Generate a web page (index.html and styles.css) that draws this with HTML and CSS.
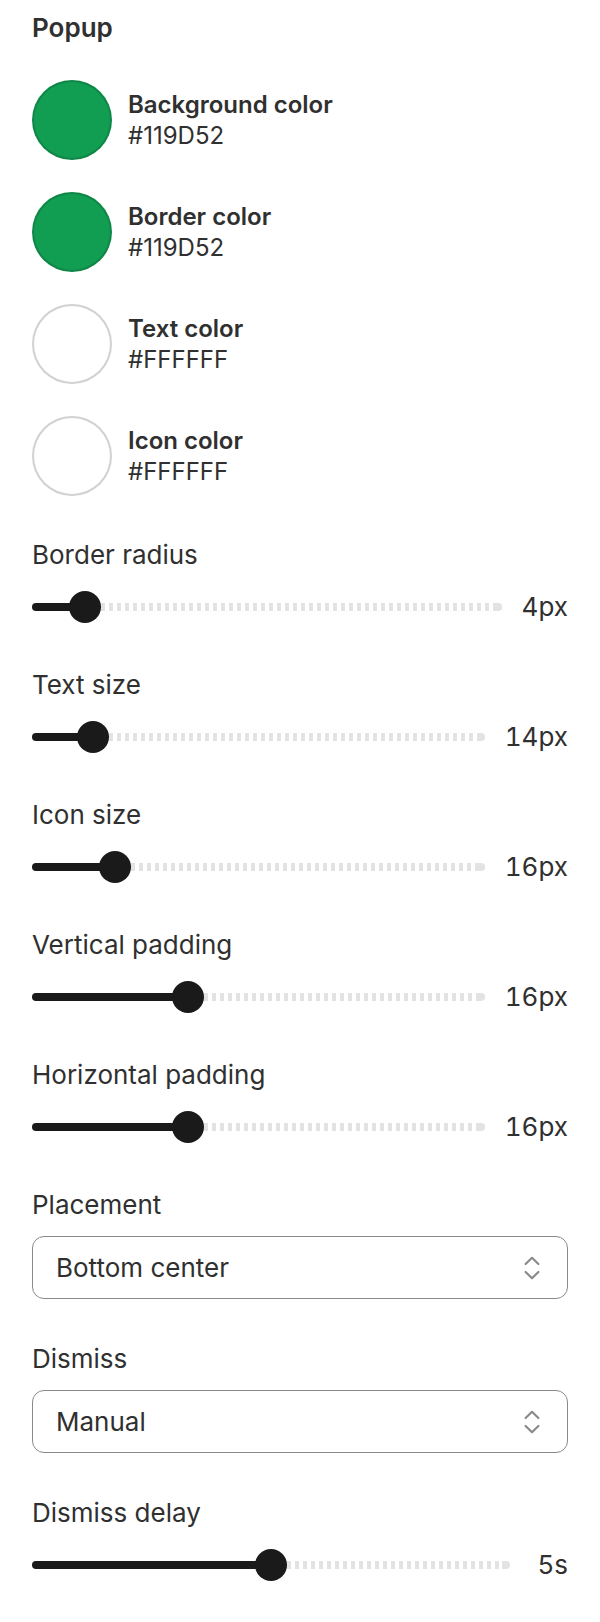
FILE: index.html
```html
<!DOCTYPE html>
<html lang="en">
<head>
<meta charset="utf-8">
<title>Popup settings</title>
<link rel="stylesheet" href="styles.css">
</head>
<body>
<main class="panel">
  <h1 class="title">Popup</h1>

  <section class="colors">
    <div class="color-row">
      <span class="swatch swatch-green"></span>
      <div class="color-text">
        <div class="color-name">Background color</div>
        <div class="color-hex">#119D52</div>
      </div>
    </div>
    <div class="color-row">
      <span class="swatch swatch-green"></span>
      <div class="color-text">
        <div class="color-name">Border color</div>
        <div class="color-hex">#119D52</div>
      </div>
    </div>
    <div class="color-row">
      <span class="swatch swatch-white"></span>
      <div class="color-text">
        <div class="color-name">Text color</div>
        <div class="color-hex">#FFFFFF</div>
      </div>
    </div>
    <div class="color-row">
      <span class="swatch swatch-white"></span>
      <div class="color-text">
        <div class="color-name">Icon color</div>
        <div class="color-hex">#FFFFFF</div>
      </div>
    </div>
  </section>

  <section class="settings">
    <div class="field field-slider">
      <div class="field-label">Border radius</div>
      <div class="slider">
        <div class="track">
          <div class="fill" style="width: 53px"></div>
          <div class="rest"></div>
          <span class="thumb" style="left: 53px"></span>
        </div>
        <span class="value">4px</span>
      </div>
    </div>

    <div class="field field-slider">
      <div class="field-label">Text size</div>
      <div class="slider">
        <div class="track">
          <div class="fill" style="width: 61px"></div>
          <div class="rest"></div>
          <span class="thumb" style="left: 61px"></span>
        </div>
        <span class="value">14px</span>
      </div>
    </div>

    <div class="field field-slider">
      <div class="field-label">Icon size</div>
      <div class="slider">
        <div class="track">
          <div class="fill" style="width: 83px"></div>
          <div class="rest"></div>
          <span class="thumb" style="left: 83px"></span>
        </div>
        <span class="value">16px</span>
      </div>
    </div>

    <div class="field field-slider">
      <div class="field-label">Vertical padding</div>
      <div class="slider">
        <div class="track">
          <div class="fill" style="width: 156px"></div>
          <div class="rest"></div>
          <span class="thumb" style="left: 156px"></span>
        </div>
        <span class="value">16px</span>
      </div>
    </div>

    <div class="field field-slider">
      <div class="field-label">Horizontal padding</div>
      <div class="slider">
        <div class="track">
          <div class="fill" style="width: 156px"></div>
          <div class="rest"></div>
          <span class="thumb" style="left: 156px"></span>
        </div>
        <span class="value">16px</span>
      </div>
    </div>

    <div class="field field-select">
      <div class="field-label">Placement</div>
      <div class="select">
        <span class="select-text">Bottom center</span>
        <svg class="select-icon" viewBox="0 0 16 24" width="16" height="24" aria-hidden="true">
          <path d="M1.6 8 L8 1.8 L14.4 8" fill="none" stroke="currentColor" stroke-width="2.2" stroke-linecap="round" stroke-linejoin="round"/>
          <path d="M1.6 16 L8 22.2 L14.4 16" fill="none" stroke="currentColor" stroke-width="2.2" stroke-linecap="round" stroke-linejoin="round"/>
        </svg>
      </div>
    </div>

    <div class="field field-select">
      <div class="field-label">Dismiss</div>
      <div class="select">
        <span class="select-text">Manual</span>
        <svg class="select-icon" viewBox="0 0 16 24" width="16" height="24" aria-hidden="true">
          <path d="M1.6 8 L8 1.8 L14.4 8" fill="none" stroke="currentColor" stroke-width="2.2" stroke-linecap="round" stroke-linejoin="round"/>
          <path d="M1.6 16 L8 22.2 L14.4 16" fill="none" stroke="currentColor" stroke-width="2.2" stroke-linecap="round" stroke-linejoin="round"/>
        </svg>
      </div>
    </div>

    <div class="field field-slider">
      <div class="field-label">Dismiss delay</div>
      <div class="slider">
        <div class="track">
          <div class="fill" style="width: 239px"></div>
          <div class="rest"></div>
          <span class="thumb" style="left: 239px"></span>
        </div>
        <span class="value value-short">5s</span>
      </div>
    </div>
  </section>
</main>
</body>
</html>
```

FILE: styles.css
```css
* {
  box-sizing: border-box;
}

html, body {
  margin: 0;
  padding: 0;
  background: #ffffff;
}

body {
  font-family: Inter, "Noto Sans", "Liberation Sans", sans-serif;
  color: #303030;
  font-size: 26px;
  line-height: 32px;
}

.panel {
  padding: 12px 32px 0 32px;
}

.title {
  margin: 0;
  font-size: 26px;
  line-height: 32px;
  font-weight: 600;
}

.colors {
  margin-top: 36px;
  display: flex;
  flex-direction: column;
  gap: 32px;
}

.color-row {
  display: flex;
  align-items: center;
  gap: 16px;
}

.swatch {
  width: 80px;
  height: 80px;
  border-radius: 50%;
  border: 2px solid rgba(0, 0, 0, 0.18);
  flex: none;
}

.swatch-green {
  background: #119d52;
  border-color: rgba(0, 0, 0, 0.14);
}

.swatch-white {
  background: #ffffff;
}

.color-text {
  display: flex;
  flex-direction: column;
  font-size: 24px;
}

.color-name {
  font-weight: 600;
  line-height: 31px;
}

.color-hex {
  line-height: 31px;
}

.settings {
  margin-top: 43px;
  display: flex;
  flex-direction: column;
  gap: 46px;
}

.field {
  display: flex;
  flex-direction: column;
}

.field-slider {
  gap: 20px;
}

.field-select {
  gap: 15px;
  margin-bottom: -2px;
}

.field-label {
  line-height: 32px;
}

.slider {
  display: flex;
  align-items: center;
  gap: 20px;
  height: 32px;
}

.track {
  position: relative;
  flex: 1;
  height: 8px;
  display: flex;
}

.fill {
  height: 8px;
  background: #1a1a1a;
  border-radius: 4px 0 0 4px;
  flex: none;
}

.rest {
  flex: 1;
  height: 8px;
  border-radius: 0 4px 4px 0;
  background: repeating-linear-gradient(to right, #e3e3e3 0 4px, transparent 4px 8px);
  position: relative;
}

.rest::after {
  content: "";
  position: absolute;
  right: 0;
  top: 0;
  width: 8px;
  height: 8px;
  border-radius: 0 4px 4px 0;
  background: #e3e3e3;
}

.thumb {
  position: absolute;
  top: 50%;
  width: 32px;
  height: 32px;
  margin-left: -16px;
  margin-top: -16px;
  border-radius: 50%;
  background: #1a1a1a;
}

.value {
  flex: none;
  line-height: 32px;
  font-variant-numeric: tabular-nums;
}

.value-short {
  margin-left: 7px;
}

.select {
  display: flex;
  align-items: center;
  justify-content: space-between;
  height: 63px;
  padding: 0 27px 0 23px;
  border: 1px solid #8a8a8a;
  border-radius: 12px;
  background: #ffffff;
}

.select-text {
  line-height: 32px;
}

.select-icon {
  width: 16px;
  height: 24px;
  color: #8a8a8a;
  flex: none;
}
```
